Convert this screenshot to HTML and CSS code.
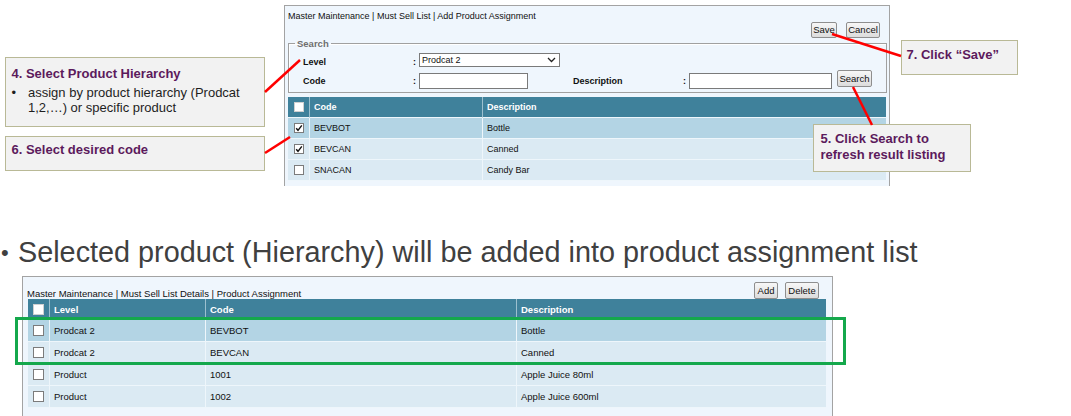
FILE: index.html
```html
<!DOCTYPE html>
<html>
<head>
<meta charset="utf-8">
<link rel="stylesheet" href="styles.css">
</head>
<body>
<div class="slide">
  <section class="top">
    <div class="panel top-panel">
      <div class="crumb">Master Maintenance | Must Sell List | Add Product Assignment</div>
      <div class="actions">
        <button class="btn w-save">Save</button>
        <button class="btn w-cancel">Cancel</button>
      </div>
      <fieldset class="search">
        <legend>Search</legend>
        <div class="frow">
          <span class="lbl">Level</span><span class="colon">:</span>
          <div class="select">Prodcat 2<svg class="chev" width="9" height="6" viewBox="0 0 9 6"><polyline points="1,1 4.5,4.5 8,1" fill="none" stroke="#222" stroke-width="1.3"/></svg></div>
        </div>
        <div class="frow">
          <span class="lbl">Code</span><span class="colon">:</span><span class="input code-in"></span>
          <span class="lbl desc-lbl">Description</span><span class="colon">:</span><span class="input desc-in"></span>
          <button class="btn w-search">Search</button>
        </div>
      </fieldset>
      <table class="grid top-grid">
        <colgroup><col class="c-cb"><col class="c-code"><col></colgroup>
        <thead>
          <tr><th class="cbc"><span class="cb head"></span></th><th>Code</th><th>Description</th></tr>
        </thead>
        <tbody>
          <tr class="hl"><td class="cbc"><span class="cb on"><svg width="8" height="8" viewBox="0 0 8 8"><path d="M1.2 4.2 L3 6.3 L6.8 1.3" fill="none" stroke="#111" stroke-width="1.4"/></svg></span></td><td>BEVBOT</td><td>Bottle</td></tr>
          <tr><td class="cbc"><span class="cb on"><svg width="8" height="8" viewBox="0 0 8 8"><path d="M1.2 4.2 L3 6.3 L6.8 1.3" fill="none" stroke="#111" stroke-width="1.4"/></svg></span></td><td>BEVCAN</td><td>Canned</td></tr>
          <tr><td class="cbc"><span class="cb"></span></td><td>SNACAN</td><td>Candy Bar</td></tr>
        </tbody>
      </table>
    </div>

    <div class="note note4">
      <div class="note-title">4. Select Product Hierarchy</div>
      <div class="note-item"><span class="ndot">•</span><span>assign by product hierarchy (Prodcat<br>1,2,…) or specific product</span></div>
    </div>
    <div class="note note6"><div class="note-title">6. Select desired code</div></div>
    <div class="note note7"><div class="note-title">7. Click “Save”</div></div>
    <div class="note note5"><div class="note-title">5. Click Search to<br>refresh result listing</div></div>
  </section>

  <p class="bullet"><span class="bdot">•</span>Selected product (Hierarchy) will be added into product assignment list</p>

  <div class="panel bottom-panel">
    <div class="bhead">
      <div class="crumb">Master Maintenance | Must Sell List Details | Product Assignment</div>
      <div class="bactions">
        <button class="btn tall w-add">Add</button>
        <button class="btn tall w-delete">Delete</button>
      </div>
    </div>
    <table class="grid bottom-grid">
      <colgroup><col class="c-cb"><col class="c-level"><col class="c-bcode"><col></colgroup>
      <thead>
        <tr><th class="cbc"><span class="cb head"></span></th><th>Level</th><th>Code</th><th>Description</th></tr>
      </thead>
      <tbody>
        <tr class="hl"><td class="cbc"><span class="cb"></span></td><td>Prodcat 2</td><td>BEVBOT</td><td>Bottle</td></tr>
        <tr><td class="cbc"><span class="cb"></span></td><td>Prodcat 2</td><td>BEVCAN</td><td>Canned</td></tr>
        <tr><td class="cbc"><span class="cb"></span></td><td>Product</td><td>1001</td><td>Apple Juice 80ml</td></tr>
        <tr><td class="cbc"><span class="cb"></span></td><td>Product</td><td>1002</td><td>Apple Juice 600ml</td></tr>
      </tbody>
    </table>
  </div>

  <svg class="overlay" width="1071" height="416" viewBox="0 0 1071 416">
    <g stroke="#ff0000" stroke-width="2.5" stroke-linecap="butt">
      <line x1="265" y1="92" x2="300" y2="60"/>
      <line x1="265" y1="153" x2="290" y2="137"/>
      <line x1="832" y1="34" x2="901" y2="56"/>
      <line x1="853" y1="87" x2="872" y2="125"/>
    </g>
    <rect x="16.5" y="318.5" width="828" height="45" fill="none" stroke="#14a84c" stroke-width="3"/>
  </svg>
</div>
</body>
</html>
```

FILE: styles.css
```css
body {
  margin: 0;
  width: 1071px;
  height: 416px;
  overflow: hidden;
  background: #ffffff;
  font-family: "Liberation Sans", Arial, sans-serif;
}

.slide {
  position: relative;
  width: 1071px;
  height: 416px;
}

.top {
  height: 186px;
  padding-top: 5px;
  box-sizing: border-box;
}

.panel {
  background: #eff6fd;
  border: 1px solid #a3a3a3;
  border-bottom: none;
  box-sizing: border-box;
  overflow: hidden;
}

.top-panel {
  margin-left: 284px;
  width: 606px;
  height: 181px;
}

.crumb {
  font-size: 9px;
  line-height: 12px;
  color: #111;
  white-space: nowrap;
}

.top-panel .crumb {
  padding: 4px 0 0 3px;
}

.actions {
  display: flex;
  justify-content: flex-end;
  gap: 9px;
  padding-right: 9px;
}

.btn {
  font-family: inherit;
  font-size: 9.5px;
  color: #111;
  height: 16px;
  padding: 0;
  border: 1px solid #8e8e8e;
  border-radius: 2px;
  background: linear-gradient(#f7f7f7, #dcdcdc);
  box-sizing: border-box;
  line-height: 14px;
}

.btn.tall { height: 17px; }
.w-save { width: 26px; }
.w-cancel { width: 34px; }
.w-search { width: 35px; height: 17px; margin-left: 5px; align-self: flex-start; margin-top: -1px; }
.w-add { width: 24px; }
.w-delete { width: 34px; }

.search {
  margin: 0 2px 0 3px;
  padding: 0 0 2px 6px;
  border: 1px solid #a0a0a0;
  box-shadow: inset 1px 1px 0 #ffffff;
}

.search legend {
  padding: 0 2px;
  font-size: 9.5px;
  line-height: 11px;
  font-weight: bold;
  color: #6e6e6e;
}

.frow {
  display: flex;
  align-items: center;
  height: 19px;
  margin-left: 8px;
  font-size: 9px;
}

.frow:first-of-type { margin-top: 3px; }

.lbl {
  width: 110px;
  font-weight: bold;
  color: #111;
}

.desc-lbl { margin-left: 45px; }

.colon {
  width: 6px;
  font-weight: bold;
  color: #111;
}

.select {
  position: relative;
  width: 141px;
  height: 14px;
  box-sizing: border-box;
  border: 1px solid #7a7a7a;
  background: #fff;
  padding-left: 2px;
  line-height: 12px;
  font-size: 9px;
  color: #111;
  margin-top: -3px;
}

.chev {
  position: absolute;
  right: 3px;
  top: 3px;
}

.input {
  height: 16px;
  box-sizing: border-box;
  border: 1px solid #7a7a7a;
  background: #fff;
}

.code-in { width: 109px; }
.desc-in { width: 143px; }

.grid {
  border-collapse: separate;
  border-spacing: 0;
  table-layout: fixed;
  font-size: 9px;
  color: #111;
}

.grid th,
.grid td {
  box-sizing: border-box;
  padding: 0 4px;
  text-align: left;
  white-space: nowrap;
  border-bottom: 1px solid #eef6fb;
}

.grid th + th,
.grid td + td {
  border-left: 1px solid #eef6fb;
}

.grid th {
  background: #3f819b;
  color: #fff;
  font-weight: bold;
}

.grid th + th { border-left-color: #9cc0cf; }

.grid td { background: #dbeaf3; }
.grid tr.hl td { background: #b3d4e4; }

.grid .cbc {
  padding: 0;
  text-align: center;
}

.top-grid {
  margin: 4px 0 0 3px;
  width: 598px;
}

.top-grid th { height: 21px; }
.top-grid td { height: 21px; }

.c-cb { width: 21px; }
.c-code { width: 173px; }
.c-level { width: 156px; }
.c-bcode { width: 311px; }

.cb {
  display: inline-block;
  width: 10px;
  height: 10px;
  box-sizing: border-box;
  border: 1px solid #7b7b7b;
  background: #fff;
  vertical-align: middle;
  position: relative;
}

.cb svg {
  position: absolute;
  left: 0;
  top: 0;
}

.cb.head {
  border-color: #d0d0d0;
}

.note {
  position: absolute;
  box-sizing: border-box;
  background: #f2f2f2;
  border: 1.5px solid #b9b996;
  color: #5c1a5c;
}

.note-title {
  font-size: 13px;
  line-height: 16px;
  font-weight: bold;
  white-space: nowrap;
}

.note-item {
  display: flex;
  margin-top: 3px;
  font-size: 13px;
  line-height: 15px;
  color: #1e1e1e;
}

.ndot {
  width: 16.5px;
  flex: none;
}

.note4 {
  left: 5px;
  top: 57px;
  width: 260px;
  height: 70px;
  padding: 7.5px 0 0 5.5px;
}

.note6 {
  left: 5px;
  top: 136px;
  width: 260px;
  height: 35px;
  padding: 5px 0 0 5.5px;
}

.note7 {
  left: 901px;
  top: 40px;
  width: 117px;
  height: 35px;
  padding: 6px 0 0 4.5px;
}

.note5 {
  left: 813px;
  top: 124px;
  width: 158px;
  height: 48px;
  padding: 6px 0 0 6.5px;
}

.bullet {
  margin: 50px 0 0 0;
  padding-left: 1px;
  font-size: 28.8px;
  line-height: 32px;
  color: #404040;
  white-space: nowrap;
}

.bdot {
  display: inline-block;
  width: 17px;
  font-size: 22px;
  vertical-align: 2px;
}

.bottom-panel {
  margin: 7px 0 0 22px;
  width: 811px;
  height: 141px;
}

.bhead {
  display: flex;
  justify-content: space-between;
  align-items: flex-end;
  padding: 5px 13px 0 4px;
}

.bottom-panel .crumb {
  font-size: 9.5px;
  line-height: 11px;
}

.bactions {
  display: flex;
  gap: 7px;
}

.bottom-grid {
  margin: 0 0 0 5px;
  width: 798px;
  font-size: 9.5px;
}

.bottom-grid th { height: 21px; }
.bottom-grid td { height: 22px; }

.bottom-grid .cb {
  width: 11px;
  height: 11px;
}

.overlay {
  position: absolute;
  left: 0;
  top: 0;
  pointer-events: none;
}
```
